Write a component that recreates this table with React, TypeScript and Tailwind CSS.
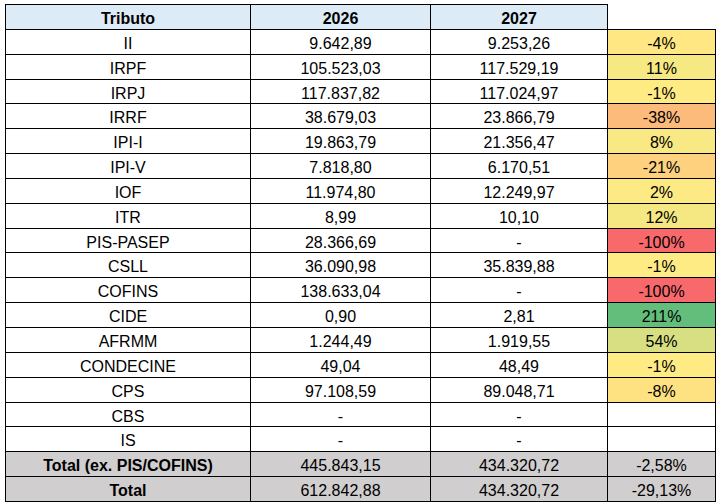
const rows = [
  { name: 'II', a: '9.642,89', b: '9.253,26', pct: '-4%', bg: 'bg-[#ffe783]', h: 'h-[25px]' },
  { name: 'IRPF', a: '105.523,03', b: '117.529,19', pct: '11%', bg: 'bg-[#f6e883]', h: 'h-[25px]' },
  { name: 'IRPJ', a: '117.837,82', b: '117.024,97', pct: '-1%', bg: 'bg-[#ffeb84]', h: 'h-[24px]' },
  { name: 'IRRF', a: '38.679,03', b: '23.866,79', pct: '-38%', bg: 'bg-[#fcba7b]', h: 'h-[25px]' },
  { name: 'IPI-I', a: '19.863,79', b: '21.356,47', pct: '8%', bg: 'bg-[#f8e984]', h: 'h-[25px]' },
  { name: 'IPI-V', a: '7.818,80', b: '6.170,51', pct: '-21%', bg: 'bg-[#fed17f]', h: 'h-[25px]' },
  { name: 'IOF', a: '11.974,80', b: '12.249,97', pct: '2%', bg: 'bg-[#fdea84]', h: 'h-[25px]' },
  { name: 'ITR', a: '8,99', b: '10,10', pct: '12%', bg: 'bg-[#f5e883]', h: 'h-[25px]' },
  { name: 'PIS-PASEP', a: '28.366,69', b: '-', pct: '-100%', bg: 'bg-[#f8696b]', h: 'h-[24px]' },
  { name: 'CSLL', a: '36.090,98', b: '35.839,88', pct: '-1%', bg: 'bg-[#ffeb84]', h: 'h-[25px]' },
  { name: 'COFINS', a: '138.633,04', b: '-', pct: '-100%', bg: 'bg-[#f8696b]', h: 'h-[25px]' },
  { name: 'CIDE', a: '0,90', b: '2,81', pct: '211%', bg: 'bg-[#63be7b]', h: 'h-[25px]' },
  { name: 'AFRMM', a: '1.244,49', b: '1.919,55', pct: '54%', bg: 'bg-[#d7df82]', h: 'h-[25px]' },
  { name: 'CONDECINE', a: '49,04', b: '48,49', pct: '-1%', bg: 'bg-[#ffeb84]', h: 'h-[25px]' },
  { name: 'CPS', a: '97.108,59', b: '89.048,71', pct: '-8%', bg: 'bg-[#fee282]', h: 'h-[25px]' },
  { name: 'CBS', a: '-', b: '-', pct: '', bg: 'bg-white', h: 'h-[24px]' },
  { name: 'IS', a: '-', b: '-', pct: '', bg: 'bg-white', h: 'h-[25px]' },
];

const totals = [
  { name: 'Total (ex. PIS/COFINS)', a: '445.843,15', b: '434.320,72', pct: '-2,58%', h: 'h-[25px]' },
  { name: 'Total', a: '612.842,88', b: '434.320,72', pct: '-29,13%', h: 'h-[25px]' },
];

const cell = 'flex items-center justify-center border-b border-r border-black pt-[4px]';

export default function App() {
  return (
    <div
      className="min-h-[503px] bg-white pl-[5px] pt-[4px] text-[16px] text-black"
      style={{ fontFamily: '"Liberation Sans", Arial, sans-serif' }}
    >
      <div className="grid w-[711px] grid-cols-[246px_180px_177px_108px]">
        {/* header */}
        <div className={`${cell} h-[26px] border-l border-t bg-[#ddebf7] font-bold`}>Tributo</div>
        <div className={`${cell} h-[26px] border-t bg-[#ddebf7] font-bold`}>2026</div>
        <div className={`${cell} h-[26px] border-t bg-[#ddebf7] font-bold`}>2027</div>
        <div className="h-[26px] border-b border-black bg-white" />

        {rows.map((r) => (
          <div key={r.name} className="contents">
            <div className={`${cell} ${r.h} border-l`}>{r.name}</div>
            <div className={`${cell} ${r.h}`}>{r.a}</div>
            <div className={`${cell} ${r.h}`}>{r.b}</div>
            <div className={`${cell} ${r.h} ${r.bg}`}>{r.pct}</div>
          </div>
        ))}

        {totals.map((t) => (
          <div key={t.name} className="contents">
            <div className={`${cell} ${t.h} border-l bg-[#d0cece] font-bold`}>{t.name}</div>
            <div className={`${cell} ${t.h} bg-[#d0cece]`}>{t.a}</div>
            <div className={`${cell} ${t.h} bg-[#d0cece]`}>{t.b}</div>
            <div className={`${cell} ${t.h} bg-[#d0cece]`}>{t.pct}</div>
          </div>
        ))}
      </div>
    </div>
  );
}
